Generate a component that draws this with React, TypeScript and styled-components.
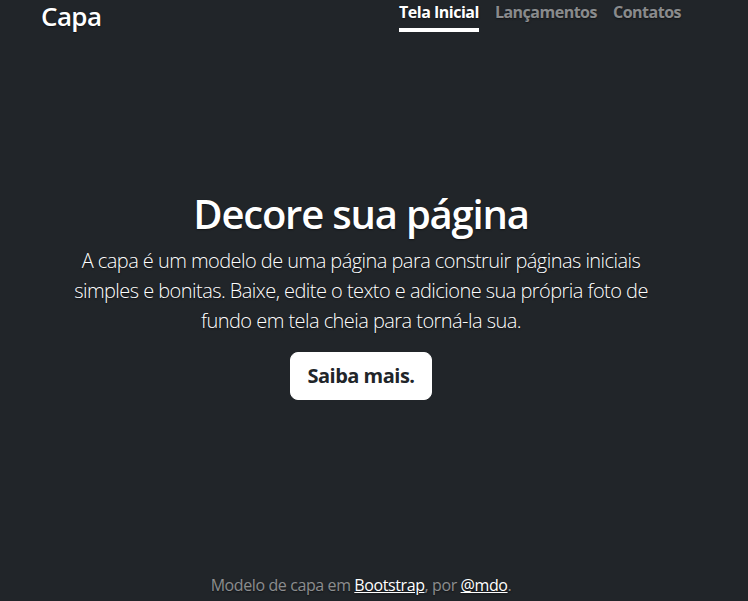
import * as React from 'react';
import styled, { createGlobalStyle } from 'styled-components';

const GlobalStyle = createGlobalStyle`
  html, body {
    margin: 0;
    padding: 0;
    background-color: #212529;
  }
  body {
    font-family: "Open Sans", "Noto Sans", sans-serif;
    color: #fff;
    text-shadow: 0 0.05rem 0.1rem rgba(0, 0, 0, 0.5);
  }
`;

const Viewport = styled.div`
  width: 722px;
  height: 601px;
  overflow: hidden;
`;

const CoverContainer = styled.div`
  box-sizing: border-box;
  max-width: 672px;
  height: 100%;
  margin: 0 auto;
  padding: 0 16px 4px;
  display: flex;
  flex-direction: column;
`;

const Header = styled.header`
  display: flex;
  justify-content: space-between;
  align-items: flex-start;
`;

const Brand = styled.h3`
  margin: 0;
  padding-top: 1px;
  font-size: 26px;
  font-weight: 600;
  line-height: 31px;
  letter-spacing: -0.6px;
`;

const Nav = styled.nav`
  display: flex;
  gap: 16px;
`;

const NavLink = styled.a<{ $active?: boolean }>`
  display: block;
  padding: 0 0 4px;
  font-size: 16px;
  font-weight: 700;
  line-height: 24px;
  letter-spacing: -0.5px;
  text-decoration: none;
  color: ${(p) => (p.$active ? '#fff' : 'rgba(255, 255, 255, 0.5)')};
  border-bottom: 4px solid ${(p) => (p.$active ? '#fff' : 'transparent')};
  cursor: pointer;
`;

const Main = styled.main`
  margin: auto 0;
  padding: 0 16px;
  text-align: center;
`;

const Title = styled.h1`
  margin: 0 0 8px;
  font-size: 40px;
  font-weight: 600;
  line-height: 48px;
  letter-spacing: -1.2px;
`;

const Lead = styled.p`
  margin: 0 0 16px;
  font-size: 20px;
  font-weight: 300;
  line-height: 30px;
  letter-spacing: -0.55px;
`;

const Button = styled.a`
  display: inline-block;
  padding: 8px 16px;
  font-size: 20px;
  font-weight: 700;
  line-height: 30px;
  letter-spacing: -0.5px;
  color: #212529;
  background-color: #fff;
  border: 1px solid #fff;
  border-radius: 8px;
  text-decoration: none;
  text-shadow: none;
  cursor: pointer;
`;

const Footer = styled.footer`
  text-align: center;
  font-size: 16px;
  line-height: 24px;
  letter-spacing: -0.4px;
  color: rgba(255, 255, 255, 0.5);
`;

const FooterLink = styled.a`
  color: #fff;
  text-decoration: underline;
`;

export default function App() {
  return (
    <>
      <GlobalStyle />
      <Viewport>
        <CoverContainer>
          <Header>
            <Brand>Capa</Brand>
            <Nav>
              <NavLink $active>Tela Inicial</NavLink>
              <NavLink>Lançamentos</NavLink>
              <NavLink>Contatos</NavLink>
            </Nav>
          </Header>
          <Main>
            <Title>Decore sua página</Title>
            <Lead>
              A capa é um modelo de uma página para construir páginas iniciais simples e bonitas.
              Baixe, edite o texto e adicione sua própria foto de fundo em tela cheia para torná-la
              sua.
            </Lead>
            <Lead>
              <Button>Saiba mais.</Button>
            </Lead>
          </Main>
          <Footer>
            Modelo de capa em <FooterLink>Bootstrap</FooterLink>, por <FooterLink>@mdo</FooterLink>.
          </Footer>
        </CoverContainer>
      </Viewport>
    </>
  );
}
